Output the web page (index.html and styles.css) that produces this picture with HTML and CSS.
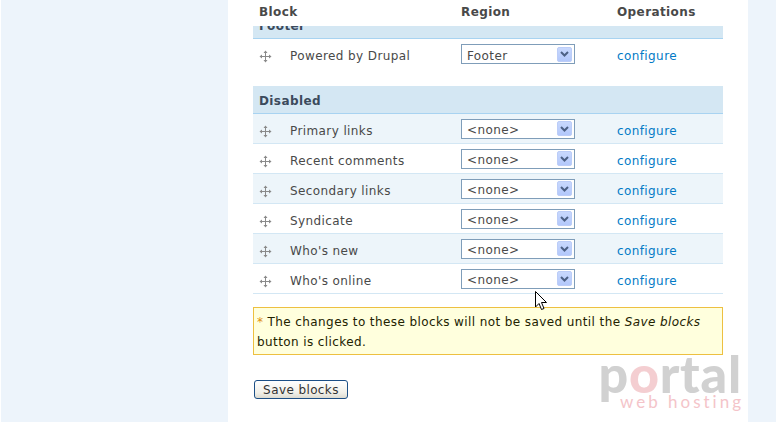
FILE: index.html
```html
<!DOCTYPE html>
<html>
<head>
<meta charset="utf-8">
<link rel="stylesheet" href="styles.css">
</head>
<body>
<div class="page">
  <aside class="sidebar-left"></aside>
  <main class="main">
    <div class="sticky-head">
      <span class="h-block">Block</span>
      <span class="h-region">Region</span>
      <span class="h-ops">Operations</span>
    </div>
    <table class="blocks">
      <colgroup><col class="c1"><col class="c2"><col class="c3"></colgroup>
      <tbody>
        <tr class="region"><td colspan="3">Footer</td></tr>
        <tr class="row plain">
          <td><span class="drag"><svg width="13" height="13" viewBox="0 0 13 13"><path d="M6.5 0.5 L4.5 3 H6 V6 H3 V4.5 L0.5 6.5 L3 8.5 V7 H6 V10 H4.5 L6.5 12.5 L8.5 10 H7 V7 H10 V8.5 L12.5 6.5 L10 4.5 V6 H7 V3 H8.5 Z" fill="#8a8a8a"/></svg></span><span class="name">Powered by Drupal</span></td>
          <td><span class="select"><span class="val">Footer</span><span class="arrow"><svg width="9" height="6" viewBox="0 0 9 6"><path d="M1 1 L4.5 4.5 L8 1" stroke="#4d6185" stroke-width="2" fill="none"/></svg></span></span></td>
          <td><a href="#" class="link">configure</a></td>
        </tr>
        <tr class="spacer"><td colspan="3"></td></tr>
        <tr class="region"><td colspan="3">Disabled</td></tr>
        <tr class="row odd">
          <td><span class="drag"><svg width="13" height="13" viewBox="0 0 13 13"><path d="M6.5 0.5 L4.5 3 H6 V6 H3 V4.5 L0.5 6.5 L3 8.5 V7 H6 V10 H4.5 L6.5 12.5 L8.5 10 H7 V7 H10 V8.5 L12.5 6.5 L10 4.5 V6 H7 V3 H8.5 Z" fill="#8a8a8a"/></svg></span><span class="name">Primary links</span></td>
          <td><span class="select"><span class="val">&lt;none&gt;</span><span class="arrow"><svg width="9" height="6" viewBox="0 0 9 6"><path d="M1 1 L4.5 4.5 L8 1" stroke="#4d6185" stroke-width="2" fill="none"/></svg></span></span></td>
          <td><a href="#" class="link">configure</a></td>
        </tr>
        <tr class="row even">
          <td><span class="drag"><svg width="13" height="13" viewBox="0 0 13 13"><path d="M6.5 0.5 L4.5 3 H6 V6 H3 V4.5 L0.5 6.5 L3 8.5 V7 H6 V10 H4.5 L6.5 12.5 L8.5 10 H7 V7 H10 V8.5 L12.5 6.5 L10 4.5 V6 H7 V3 H8.5 Z" fill="#8a8a8a"/></svg></span><span class="name">Recent comments</span></td>
          <td><span class="select"><span class="val">&lt;none&gt;</span><span class="arrow"><svg width="9" height="6" viewBox="0 0 9 6"><path d="M1 1 L4.5 4.5 L8 1" stroke="#4d6185" stroke-width="2" fill="none"/></svg></span></span></td>
          <td><a href="#" class="link">configure</a></td>
        </tr>
        <tr class="row odd">
          <td><span class="drag"><svg width="13" height="13" viewBox="0 0 13 13"><path d="M6.5 0.5 L4.5 3 H6 V6 H3 V4.5 L0.5 6.5 L3 8.5 V7 H6 V10 H4.5 L6.5 12.5 L8.5 10 H7 V7 H10 V8.5 L12.5 6.5 L10 4.5 V6 H7 V3 H8.5 Z" fill="#8a8a8a"/></svg></span><span class="name">Secondary links</span></td>
          <td><span class="select"><span class="val">&lt;none&gt;</span><span class="arrow"><svg width="9" height="6" viewBox="0 0 9 6"><path d="M1 1 L4.5 4.5 L8 1" stroke="#4d6185" stroke-width="2" fill="none"/></svg></span></span></td>
          <td><a href="#" class="link">configure</a></td>
        </tr>
        <tr class="row even">
          <td><span class="drag"><svg width="13" height="13" viewBox="0 0 13 13"><path d="M6.5 0.5 L4.5 3 H6 V6 H3 V4.5 L0.5 6.5 L3 8.5 V7 H6 V10 H4.5 L6.5 12.5 L8.5 10 H7 V7 H10 V8.5 L12.5 6.5 L10 4.5 V6 H7 V3 H8.5 Z" fill="#8a8a8a"/></svg></span><span class="name">Syndicate</span></td>
          <td><span class="select"><span class="val">&lt;none&gt;</span><span class="arrow"><svg width="9" height="6" viewBox="0 0 9 6"><path d="M1 1 L4.5 4.5 L8 1" stroke="#4d6185" stroke-width="2" fill="none"/></svg></span></span></td>
          <td><a href="#" class="link">configure</a></td>
        </tr>
        <tr class="row odd">
          <td><span class="drag"><svg width="13" height="13" viewBox="0 0 13 13"><path d="M6.5 0.5 L4.5 3 H6 V6 H3 V4.5 L0.5 6.5 L3 8.5 V7 H6 V10 H4.5 L6.5 12.5 L8.5 10 H7 V7 H10 V8.5 L12.5 6.5 L10 4.5 V6 H7 V3 H8.5 Z" fill="#8a8a8a"/></svg></span><span class="name">Who's new</span></td>
          <td><span class="select"><span class="val">&lt;none&gt;</span><span class="arrow"><svg width="9" height="6" viewBox="0 0 9 6"><path d="M1 1 L4.5 4.5 L8 1" stroke="#4d6185" stroke-width="2" fill="none"/></svg></span></span></td>
          <td><a href="#" class="link">configure</a></td>
        </tr>
        <tr class="row even">
          <td><span class="drag"><svg width="13" height="13" viewBox="0 0 13 13"><path d="M6.5 0.5 L4.5 3 H6 V6 H3 V4.5 L0.5 6.5 L3 8.5 V7 H6 V10 H4.5 L6.5 12.5 L8.5 10 H7 V7 H10 V8.5 L12.5 6.5 L10 4.5 V6 H7 V3 H8.5 Z" fill="#8a8a8a"/></svg></span><span class="name">Who's online</span></td>
          <td><span class="select"><span class="val">&lt;none&gt;</span><span class="arrow"><svg width="9" height="6" viewBox="0 0 9 6"><path d="M1 1 L4.5 4.5 L8 1" stroke="#4d6185" stroke-width="2" fill="none"/></svg></span></span></td>
          <td><a href="#" class="link">configure</a></td>
        </tr>
      </tbody>
    </table>
    <div class="warning"><span class="star">*</span> The changes to these blocks will not be saved until the <em>Save blocks</em> button is clicked.</div>
    <button class="save">Save blocks</button>
    <div class="watermark">
      <div class="wm-top">p<span class="wm-o">o</span>rtal</div>
      <div class="wm-bottom">web hosting</div>
    </div>
    <svg class="cursor" width="13" height="20" viewBox="0 0 13 20"><path d="M0.5 0.5 L0.5 16 L4 12.5 L6.5 18.5 L9 17.5 L6.5 11.5 L11.5 11.5 Z" fill="#fff" stroke="#000" stroke-width="1"/></svg>
  </main>
  <aside class="sidebar-right"></aside>
</div>
</body>
</html>
```
FILE: styles.css
```css
html, body {
  margin: 0;
  padding: 0;
  background: #fff;
}
body {
  font-family: "DejaVu Sans", Verdana, sans-serif;
  font-size: 12px;
  letter-spacing: 0.4px;
  color: #494949;
}
.page {
  display: flex;
  width: 776px;
  height: 422px;
  overflow: hidden;
}
.sidebar-left {
  width: 227px;
  margin-left: 1px;
  background: #edf4fb;
  flex: none;
}
.sidebar-right {
  width: 28px;
  background: #edf4fb;
  flex: none;
}
.main {
  position: relative;
  width: 470px;
  padding: 11px 25px 0 25px;
  flex: none;
}
.sticky-head {
  position: absolute;
  left: 25px;
  top: 0;
  width: 470px;
  height: 26px;
  background: #fff;
  font-weight: bold;
  line-height: 25px;
  z-index: 2;
}
.sticky-head span {
  position: absolute;
  top: 0;
}
.h-block { left: 6px; }
.h-region { left: 208px; }
.h-ops { left: 364px; }
.blocks {
  width: 470px;
  border-collapse: collapse;
  table-layout: fixed;
}
.c1 { width: 208px; }
.c2 { width: 156px; }
.c3 { width: 106px; }
.blocks td {
  padding: 0;
}
.region td {
  height: 25px;
  padding-top: 2px;
  background: #d4e7f3;
  border-bottom: 1px solid #a8d3f1;
  font-weight: bold;
  color: #3b4a5c;
  padding-left: 6px;
  vertical-align: middle;
}
.row td {
  height: 29px;
  vertical-align: middle;
  border-bottom: 1px solid #d3e7f4;
}
.row.plain td {
  height: 30px;
  border-bottom: none;
}
.row.odd td { background: #edf5fa; }
.row.even td { background: #fff; }
.spacer td { height: 17px; }
.name, .link {
  display: inline-block;
  padding-top: 4px;
}
.drag {
  display: inline-block;
  width: 13px;
  height: 13px;
  margin-left: 6px;
  margin-right: 18px;
  vertical-align: -3px;
}
.drag svg { display: block; }
.select {
  display: flex;
  align-items: center;
  justify-content: space-between;
  box-sizing: border-box;
  width: 114px;
  height: 20px;
  border: 1px solid #7f9db9;
  background: #fff;
  padding: 3px 2px 0 5px;
}
.val { color: #494949; }
.arrow {
  width: 15px;
  height: 15px;
  box-sizing: border-box;
  border: 1px solid #bccdf8;
  border-radius: 2px;
  background: linear-gradient(#c8d8fd, #b3c8fb);
  display: flex;
  align-items: center;
  justify-content: center;
  margin-top: -3px;
}
.arrow svg { display: block; }
.link {
  color: #027ac6;
  text-decoration: none;
}
.warning {
  margin-top: 13px;
  box-sizing: border-box;
  width: 470px;
  border: 1px solid #edc040;
  background: #ffffdd;
  color: #222200;
  padding: 4px 3px 2px 3px;
  line-height: 20px;
}
.star { color: #e09010; }
.save {
  display: block;
  margin-top: 25px;
  margin-left: 1px;
  width: 94px;
  height: 19px;
  padding: 0;
  font-family: "DejaVu Sans", Verdana, sans-serif;
  font-size: 12px;
  letter-spacing: 0.4px;
  color: #333;
  border: 1px solid #1c4f86;
  border-radius: 3px;
  background: linear-gradient(#ffffff, #f0efe8 70%, #dcdad0);
}
.watermark {
  position: absolute;
  left: 364px;
  top: 352px;
  width: 150px;
  opacity: 0.8;
  text-align: right;
}
.wm-top {
  font-family: "Lato", sans-serif;
  font-weight: 900;
  font-size: 52px;
  line-height: 42px;
  color: #c6c6c6;
  letter-spacing: 0.8px;
}
.wm-o { color: #f2c3c6; }
.wm-bottom {
  font-family: "Lato", sans-serif;
  font-size: 17px;
  letter-spacing: 3px;
  color: #f2b6bc;
  line-height: 16px;
  margin-right: -2px;
}
.cursor {
  position: absolute;
  left: 307px;
  top: 291px;
  z-index: 3;
}
```
